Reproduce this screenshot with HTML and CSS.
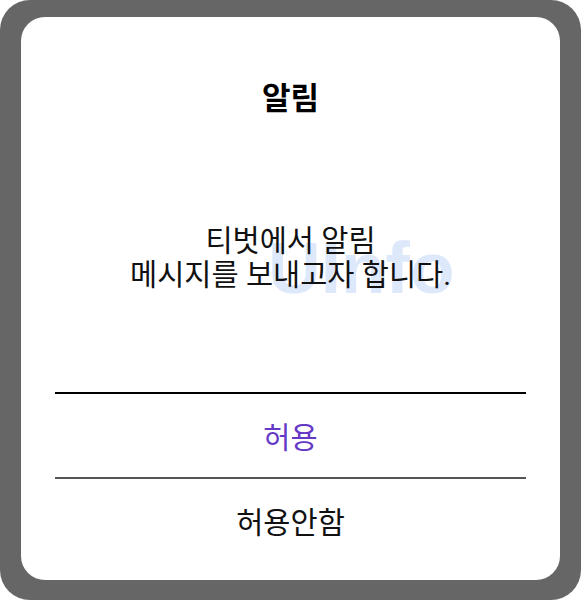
FILE: index.html
```html
<!DOCTYPE html>
<html lang="ko">
<head>
<meta charset="utf-8">
<title>알림</title>
<link rel="stylesheet" href="styles.css">
</head>
<body>
<div class="frame">
  <div class="dialog">
    <h1 class="dialog-title">알림</h1>
    <p class="dialog-message">티벗에서 알림<br>메시지를 보내고자 합니다.</p>
    <span class="watermark" aria-hidden="true">UInfo</span>
    <div class="dialog-actions">
      <button class="action action-allow" type="button">허용</button>
      <button class="action action-deny" type="button">허용안함</button>
    </div>
  </div>
</div>
</body>
</html>
```

FILE: styles.css
```css
* {
  box-sizing: border-box;
}

html, body {
  margin: 0;
  padding: 0;
  background: #ffffff;
}

body {
  width: 581px;
  height: 600px;
  font-family: Roboto, "Noto Sans CJK KR", sans-serif;
  color: #111111;
}

.frame {
  width: 581px;
  height: 600px;
  background: #666666;
  border-radius: 30px;
  padding: 17px 21px 20px 21px;
}

.dialog {
  position: relative;
  height: 100%;
  background: #ffffff;
  border-radius: 24px;
  display: flex;
  flex-direction: column;
  align-items: stretch;
  text-align: center;
  overflow: hidden;
}

.dialog-title {
  margin: 62px 0 0 0;
  font-size: 31px;
  line-height: 40px;
  font-weight: 700;
  color: #000000;
}

.dialog-message {
  position: relative;
  z-index: 1;
  margin: 105px 0 0 0;
  font-size: 29.5px;
  line-height: 34px;
  font-weight: 400;
  color: #111111;
}

/* faint brand mark sitting behind the message */
.watermark {
  position: absolute;
  left: 247px;
  top: 209px;
  font-family: "Liberation Sans", Arial, sans-serif;
  font-weight: 700;
  font-size: 73px;
  line-height: 84px;
  color: #dde8fb;
  z-index: 0;
}

.dialog-actions {
  margin: 100px 34px 0 34px;
  display: flex;
  flex-direction: column;
}

.action {
  display: block;
  width: 100%;
  height: 86px;
  margin: 0;
  padding: 5px 0 0 0;
  border: 0;
  background: transparent;
  font-family: Roboto, "Noto Sans CJK KR", sans-serif;
  font-size: 29.5px;
  line-height: 79px;
  text-align: center;
}

.action-allow {
  height: 85px;
  border-top: 2px solid #000000;
  color: #6539c6;
}

.action-deny {
  border-top: 2px solid #555555;
  color: #111111;
}
```
